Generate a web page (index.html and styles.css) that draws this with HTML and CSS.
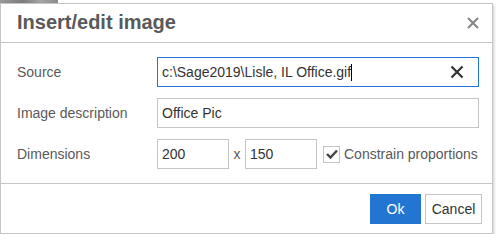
FILE: index.html
```html
<!DOCTYPE html>
<html lang="en">
<head>
  <meta charset="UTF-8" />
  <title>Insert/edit image</title>
  <link rel="stylesheet" href="styles.css">
</head>
<body>

  <div class="behind"></div>

  <div class="dialog">
    <div class="dialog-head">
      <h1>Insert/edit image</h1>
      <button class="close" aria-label="Close">
        <svg width="12" height="12" viewBox="0 0 12 12"><path d="M1 1 L11 11 M11 1 L1 11" stroke="#858585" stroke-width="2"/></svg>
      </button>
    </div>

    <div class="dialog-body">
      <div class="row">
        <label>Source</label>
        <div class="field focused">
          <span class="value">c:\Sage2019\Lisle, IL Office.gif<span class="caret"></span></span>
          <svg class="clear" width="14" height="14" viewBox="0 0 14 14"><path d="M1.5 1.5 L12.5 12.5 M12.5 1.5 L1.5 12.5" stroke="#333" stroke-width="2.2"/></svg>
        </div>
      </div>
      <div class="row">
        <label>Image description</label>
        <div class="field"><span class="value">Office Pic</span></div>
      </div>
      <div class="row">
        <label>Dimensions</label>
        <div class="dims">
          <div class="field small"><span class="value">200</span></div>
          <span class="by">x</span>
          <div class="field small"><span class="value">150</span></div>
          <span class="check">
            <svg width="12" height="10" viewBox="0 0 12 10"><path d="M1 5 L4.5 8.5 L11 1.5" fill="none" stroke="#444" stroke-width="2.4"/></svg>
          </span>
          <span class="check-label">Constrain proportions</span>
        </div>
      </div>
    </div>

    <div class="dialog-foot">
      <button class="btn primary">Ok</button>
      <button class="btn cancel">Cancel</button>
    </div>
  </div>

</body>
</html>
```
FILE: styles.css
```css
* {
  box-sizing: border-box;
}
body {
  margin: 0;
  background: #fff;
  font-family: "Liberation Sans", Arial, sans-serif;
  font-size: 14px;
  color: #595959;
}
.behind {
  width: 58px;
  height: 3px;
  background: linear-gradient(90deg, #9a9a9a, #7d7d7d 40%, #a5a5a5 70%, #8c8c8c);
}
.dialog {
  width: 493px;
  height: 231px;
  border: 1px solid #c5c5c5;
  background: #fff;
  box-shadow: 1px 2px 3px rgba(0, 0, 0, 0.2);
  display: flex;
  flex-direction: column;
}
.dialog-head {
  height: 39px;
  border-bottom: 1px solid #c5c5c5;
  display: flex;
  align-items: center;
  justify-content: space-between;
  padding: 0 13px 0 16px;
}
.dialog-head h1 {
  margin: 0 0 1px;
  font-size: 20px;
  font-weight: bold;
  color: #595959;
}
.close {
  border: none;
  background: none;
  padding: 0;
  display: flex;
  cursor: pointer;
}
.dialog-body {
  flex: 1;
  padding: 14px 13px 0 16px;
  display: flex;
  flex-direction: column;
  gap: 11px;
}
.row {
  display: flex;
  align-items: center;
  height: 30px;
}
.row label {
  width: 140px;
}
.field {
  flex: 1;
  height: 30px;
  border: 1px solid #c5c5c5;
  display: flex;
  align-items: center;
  padding: 0 6px 0 4px;
  color: #333;
}
.field.focused {
  border-color: #2276d2;
}
.value {
  flex: 1;
  display: flex;
  align-items: center;
}
.caret {
  width: 1px;
  height: 17px;
  background: #000;
}
.clear {
  margin-right: 8px;
}
.dims {
  display: flex;
  align-items: center;
  flex: 1;
}
.field.small {
  flex: none;
  width: 72px;
}
.by {
  width: 16px;
  text-align: center;
}
.check {
  width: 17px;
  height: 17px;
  border: 1px solid #c5c5c5;
  margin-left: 6px;
  display: flex;
  align-items: center;
  justify-content: center;
}
.check-label {
  margin-left: 4px;
}
.dialog-foot {
  border-top: 1px solid #c5c5c5;
  height: 50px;
  display: flex;
  justify-content: flex-end;
  align-items: flex-start;
  gap: 4px;
  padding: 10px 10px 0 0;
}
.btn {
  font-family: "Liberation Sans", Arial, sans-serif;
  font-size: 14px;
  height: 30px;
  padding: 0;
  border: 1px solid #c5c5c5;
  background: #fff;
  color: #333;
  cursor: pointer;
}
.btn.cancel {
  width: 57px;
}
.btn.primary {
  width: 51px;
  background: #2276d2;
  border-color: #2276d2;
  color: #fff;
}
```
